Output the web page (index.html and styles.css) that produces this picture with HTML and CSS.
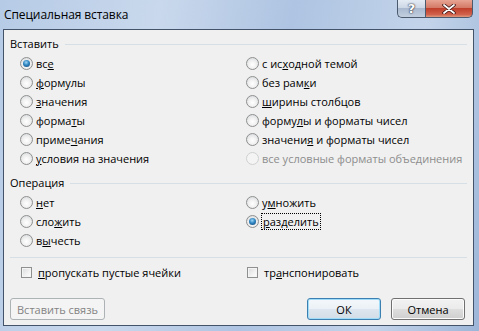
FILE: index.html
```html
<!DOCTYPE html>
<html lang="ru">
<head>
  <meta charset="UTF-8" />
  <title>Специальная вставка</title>
  <link rel="stylesheet" href="styles.css">
</head>
<body>
  <div class="window">
    <div class="titlebar">
      <span class="title">Специальная вставка</span>
      <div class="controls">
        <div class="ctl help">?</div>
        <div class="ctl close">
          <svg width="14" height="10" viewBox="0 0 14 10">
            <path d="M2 1 L12 9 M12 1 L2 9" stroke="#3a1010" stroke-width="3.4" stroke-linecap="round"/>
            <path d="M2 1 L12 9 M12 1 L2 9" stroke="#ffffff" stroke-width="1.8" stroke-linecap="round"/>
          </svg>
        </div>
      </div>
    </div>

    <div class="panel">
      <div class="group-head"><span>Вставить</span><i></i></div>
      <div class="options">
        <div class="col">
          <label class="opt"><span class="radio on"></span><span>вс<u>е</u></span></label>
          <label class="opt"><span class="radio"></span><span><u>ф</u>ормулы</span></label>
          <label class="opt"><span class="radio"></span><span><u>з</u>начения</span></label>
          <label class="opt"><span class="radio"></span><span>форма<u>т</u>ы</span></label>
          <label class="opt"><span class="radio"></span><span>приме<u>ч</u>ания</span></label>
          <label class="opt"><span class="radio"></span><span><u>у</u>словия на значения</span></label>
        </div>
        <div class="col">
          <label class="opt"><span class="radio"></span><span>с ис<u>х</u>одной темой</span></label>
          <label class="opt"><span class="radio"></span><span>без рам<u>к</u>и</span></label>
          <label class="opt"><span class="radio"></span><span><u>ш</u>ирины столбцов</span></label>
          <label class="opt"><span class="radio"></span><span>форму<u>л</u>ы и форматы чисел</span></label>
          <label class="opt"><span class="radio"></span><span>значени<u>я</u> и форматы чисел</span></label>
          <label class="opt disabled"><span class="radio"></span><span>все условные форматы объединения</span></label>
        </div>
      </div>

      <div class="group-head op"><span>Операция</span><i></i></div>
      <div class="options">
        <div class="col">
          <label class="opt"><span class="radio"></span><span><u>н</u>ет</span></label>
          <label class="opt"><span class="radio"></span><span>сло<u>ж</u>ить</span></label>
          <label class="opt"><span class="radio"></span><span>в<u>ы</u>честь</span></label>
        </div>
        <div class="col">
          <label class="opt"><span class="radio"></span><span>у<u>м</u>ножить</span></label>
          <label class="opt"><span class="radio on"></span><span class="focus"><u>р</u>азделить</span></label>
        </div>
      </div>

      <div class="sep"></div>

      <div class="options checks">
        <label class="opt"><span class="check"></span><span><u>п</u>ропускать пустые ячейки</span></label>
        <label class="opt"><span class="check"></span><span>тр<u>а</u>нспонировать</span></label>
      </div>

      <div class="buttons">
        <button class="btn" disabled>Вставить связь</button>
        <div class="right">
          <button class="btn default">ОК</button>
          <button class="btn">Отмена</button>
        </div>
      </div>
    </div>
  </div>
</body>
</html>
```

FILE: styles.css
```css
body {
  margin: 0;
  width: 479px;
  height: 331px;
  overflow: hidden;
  font-family: "Open Sans", "Noto Sans", sans-serif;
}

.window {
  width: 479px;
  height: 331px;
  display: flex;
  flex-direction: column;
  background: linear-gradient(100deg, #b6cbe6 0%, #c9d8ec 30%, #aec4e2 55%, #c3d4ea 80%, #9db6d8 100%);
}

.titlebar {
  height: 29px;
  display: flex;
  justify-content: space-between;
  align-items: flex-start;
  flex-shrink: 0;
}

.title {
  font-size: 12px;
  color: #000;
  margin: 6px 0 0 4px;
  letter-spacing: -0.1px;
}

.controls {
  display: flex;
  margin-right: 6px;
}

.ctl {
  height: 18px;
  display: flex;
  align-items: center;
  justify-content: center;
  border: 1px solid #4c5a6e;
  border-top: none;
  box-sizing: border-box;
}

.help {
  width: 28px;
  border-radius: 0 0 0 5px;
  border-right: none;
  background: linear-gradient(#e4ebf4 0%, #cdd8e6 45%, #aab9cf 50%, #c2cfe0 100%);
  color: #fff;
  font-family: "DejaVu Sans", sans-serif;
  font-weight: bold;
  font-size: 13px;
  text-shadow: 0 0 2px #223, 0 0 1px #223;
}

.close {
  width: 48px;
  border-radius: 0 0 5px 0;
  background: linear-gradient(#e8a493 0%, #d47a68 45%, #c0402c 50%, #d0604a 85%, #e09a80 100%);
}

.panel {
  flex: 1;
  margin: 0 5px 5px 3px;
  border: 1px solid #43536a;
  background: #f0f0f0;
  padding: 4px 6px 0 6px;
  font-size: 11px;
  color: #000;
}

.group-head {
  height: 19px;
  display: flex;
  align-items: center;
  gap: 6px;
}

.group-head i {
  flex: 1;
  border-top: 1px solid #d5dfe5;
  margin-top: 1px;
}

.group-head.op {
  margin-top: 5px;
}

.options {
  display: grid;
  grid-template-columns: 226px 1fr;
  padding: 1px 0 0 10px;
}

.opt {
  height: 19px;
  display: flex;
  align-items: center;
  gap: 3px;
  white-space: nowrap;
}

.opt u {
  text-decoration-thickness: 1px;
  text-underline-offset: 1px;
}

.radio {
  width: 13px;
  height: 13px;
  border-radius: 50%;
  box-sizing: border-box;
  border: 1px solid #8e8f8f;
  background: radial-gradient(circle at 50% 60%, #ffffff 0%, #f2f2f2 40%, #d2d4d7 100%);
  position: relative;
  flex-shrink: 0;
}

.radio.on::after {
  content: "";
  position: absolute;
  left: 2px;
  top: 2px;
  width: 7px;
  height: 7px;
  border-radius: 50%;
  background: radial-gradient(circle at 45% 35%, #9fd6f5 0%, #2f86c2 45%, #123f6c 100%);
}

.disabled {
  color: #8d8d8d;
}

.disabled .radio {
  border-color: #cfd0d0;
  background: #f4f4f4;
}

.focus {
  outline: 1px dotted #000;
  outline-offset: 0;
  padding: 0 1px;
  line-height: 15px;
}

.sep {
  margin: 7px 0 4px 0;
  border-top: 1px solid #d5dfe5;
}

.checks {
  padding-left: 11px;
}

.check {
  width: 11px;
  height: 11px;
  box-sizing: border-box;
  border: 1px solid #8e8f8f;
  background: linear-gradient(135deg, #d9dadc 0%, #f2f2f2 60%, #ffffff 100%);
  box-shadow: inset 0 0 0 1px #f4f4f4;
  margin-right: 3px;
  flex-shrink: 0;
}

.buttons {
  display: flex;
  justify-content: space-between;
  margin-top: 16px;
}

.right {
  display: flex;
  gap: 10px;
  margin-right: 2px;
}

.btn {
  font-family: "Open Sans", "Noto Sans", sans-serif;
  font-size: 11px;
  width: 74px;
  height: 22px;
  padding: 0;
  border: 1px solid #707070;
  border-radius: 3px;
  background: linear-gradient(#f2f2f2 0%, #ebebeb 48%, #dddddd 52%, #cfcfcf 100%);
  color: #000;
  box-shadow: inset 0 0 0 1px #fbfbfb;
}

.btn.default {
  border-color: #3c7fb1;
  box-shadow: inset 0 0 0 1px #9fdcf7;
  background: linear-gradient(#f4f8fb 0%, #ebf1f6 48%, #dde6ee 52%, #d2dde7 100%);
}

.btn[disabled] {
  width: 95px;
  border-color: #adb2b5;
  background: #f4f4f4;
  color: #838383;
  box-shadow: none;
}
```
